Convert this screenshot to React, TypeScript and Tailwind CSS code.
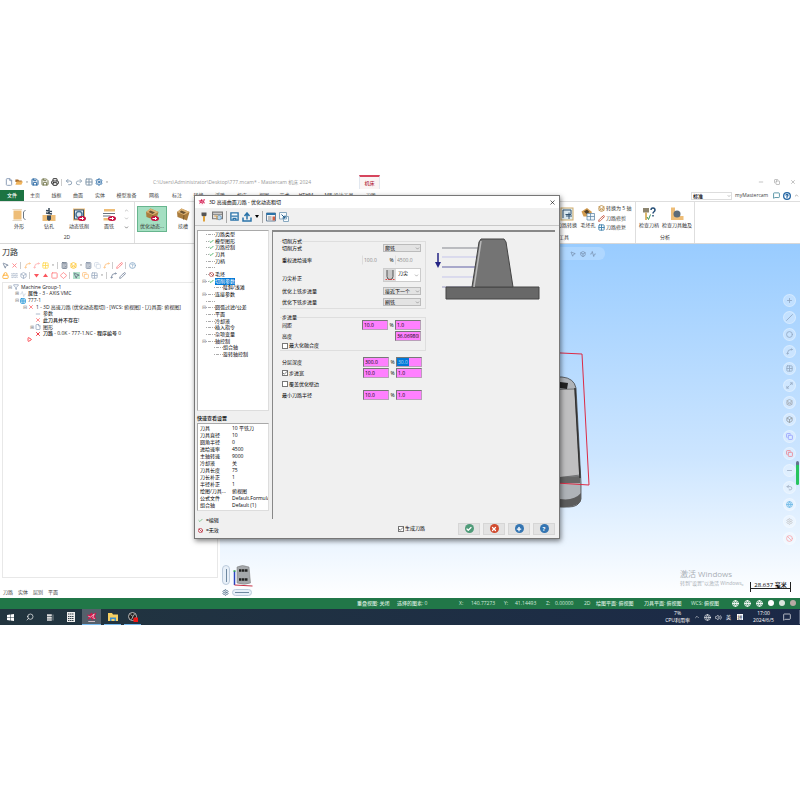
import React, { useState } from "react";
import {
  Activity, Box, Calculator, Check, ChevronDown, ChevronUp, Circle, Copy, Diamond,
  File, Filter, Globe, Grid2x2, HelpCircle, Layers, Lock, Maximize2, MessageSquare, Minus, MousePointer2,
  Pencil, Play, Plus, Printer, Redo2, Save, Search, Settings, Slash, Spline, Square, Undo2, Volume2, Waves, X, Ban,
} from "lucide-react";

type IconType = React.ComponentType<{ className?: string; strokeWidth?: number }>;

// small marks that share the toolbar rows with the icons
function Separator() {
  return <span className="h-[7px] w-[2px] shrink-0 border-l border-[#ccc]" />;
}

function DropMark() {
  return <svg viewBox="0 0 8 12" className="h-[6px] w-[4px] shrink-0"><path d="M2 5h4L4 8z" fill="#888" /></svg>;
}

function Folder({ className = "" }: { className?: string }) {
  return (
    <svg viewBox="0 0 20 16" className={className}>
      <path d="M1 2h7l2 2h7v4H1z" fill="#a86c2c" />
      <path d="M4 7h16l-4 8H1z" fill="#f0b45c" />
    </svg>
  );
}

function TriangleDown({ className = "" }: { className?: string }) {
  return <svg viewBox="0 0 14 14" className={className}><path d="M2 4h10L7 11z" fill="currentColor" /></svg>;
}

function TriangleUp({ className = "" }: { className?: string }) {
  return <svg viewBox="0 0 14 14" className={className}><path d="M2 10h10L7 3z" fill="currentColor" /></svg>;
}

type Tool = [IconType, string] | "sep" | "drop";

const quickAccess: Tool[] = [
  [File, "text-slate-400"],
  [Folder, ""],
  "drop",
  [Save, "text-[#2a68a3]"],
  [Save, "text-[#75784e]"],
  [Printer, "text-[#333]"],
  "sep",
  [Undo2, "text-[#8fa3b8]"],
  [Redo2, "text-[#9fb0c0]"],
  [Grid2x2, "text-[#8499ab]"],
  [Settings, "text-[#2d6da8]"],
  "drop",
];

const ribbonTabs = [
  ["主页", "w-[22px]"], ["线框", "w-[21px]"], ["曲面", "w-[22px]"], ["实体", "w-[22px]"], ["模型准备", "w-[31px]"],
  ["网格", "w-[24px]"], ["标注", "w-[22px]"], ["转换", "w-[21px]"], ["浮雕", "w-[22px]"], ["机床", "w-[22px]"],
  ["视图", "w-[22px]"], ["艺术", "w-[19px]"], ["HTHM", "w-[24px]"], ["MB 设计工具", "w-[42px]"], ["刀路", "w-[22px]"],
];

const panelTools: Tool[][] = [
  [
    [MousePointer2, "text-slate-500"], [X, "text-red-400"], "sep", [Spline, "text-orange-300"], [Spline, "text-red-300"],
    [Grid2x2, "text-amber-300"], "drop", "sep", [Calculator, "text-slate-600"], [Layers, "text-amber-400"], "drop",
    [Calculator, "text-slate-500"], [Copy, "text-slate-300"], [Spline, "text-orange-300"], "sep", [Pencil, "text-red-400"],
    "sep", [HelpCircle, "text-[#6f97bd]"],
  ],
  [
    [Lock, "text-amber-500"], [Waves, "text-slate-400"], [Box, "text-slate-400"], "sep", [TriangleDown, "text-red-500"],
    [TriangleUp, "text-red-500"], [Square, "text-red-400"], [Diamond, "text-red-400"], "sep",
    [MousePointer2, "bg-[#9fdcbf] text-slate-600"], [Copy, "text-orange-300"], [Grid2x2, "text-slate-400"], "drop", "sep",
    [Spline, "text-slate-500"], [Pencil, "text-slate-500"],
  ],
];

const operations: { indent: string; icon: IconType; color: string; text: string; bold?: boolean; toggle?: string }[] = [
  { indent: "pl-[5px]", icon: Filter, color: "text-slate-400", text: "Machine Group-1", bold: true, toggle: "-" },
  { indent: "pl-[12px]", icon: Activity, color: "text-slate-300", text: "属性 - 3 - AXIS VMC", bold: true, toggle: "+" },
  { indent: "pl-[12px]", icon: Grid2x2, color: "text-sky-600", text: "777-1", toggle: "-" },
  { indent: "pl-[20px]", icon: X, color: "text-red-400", text: "1 - 3D 高速刀路 (优化动态粗切) - [WCS: 俯视图] - [刀具面: 俯视图]", toggle: "-" },
  { indent: "pl-[27px]", icon: Minus, color: "text-slate-400", text: "参数" },
  { indent: "pl-[27px]", icon: X, color: "text-red-400", text: "此刀具并不存在!", bold: true },
  { indent: "pl-[27px]", icon: File, color: "text-slate-400", text: "图形", toggle: "+" },
  { indent: "pl-[27px]", icon: X, color: "text-red-600", text: "刀路 - 0.0K - 777-1.NC - 程序编号 0", bold: true },
];

const pages: { text: string; mark?: "ok" | "off"; toggle?: boolean; child?: boolean }[] = [
  { text: "刀路类型" },
  { text: "模型图形", mark: "ok" },
  { text: "刀路控制", mark: "ok" },
  { text: "刀具", mark: "ok" },
  { text: "刀柄" },
  { text: "" },
  { text: "毛坯", mark: "off" },
  { text: "切削参数", mark: "ok", toggle: true },
  { text: "陡斜/浅滩", child: true },
  { text: "连接参数", toggle: true },
  { text: "" },
  { text: "圆弧过滤/公差", toggle: true },
  { text: "平面" },
  { text: "冷却液" },
  { text: "插入指令" },
  { text: "杂项变量" },
  { text: "轴控制", toggle: true },
  { text: "组合轴", child: true },
  { text: "旋转轴控制", child: true },
];

const quickView = [
  ["刀具", "10 平铣刀"], ["刀具直径", "10"], ["圆角半径", "0"], ["进给速率", "4500"], ["主轴转速", "9000"], ["冷却液", "关"],
  ["刀具长度", "75"], ["刀长补正", "1"], ["半径补正", "1"], ["绘图/刀具...", "俯视图"], ["公式文件", "Default.Formula"], ["组合轴", "Default (1)"],
];

const statusItems = [
  ["重叠视图: 关闭", "w-[40px]"], ["选择的图素: 0", "w-[62px]"], ["X:", "w-[12px]"], ["140.77273", "w-[33px]"],
  ["Y:", "w-[11px]"], ["41.14493", "w-[31px]"], ["Z:", "w-[9px]"], ["0.00000", "w-[29px]"], ["2D", "w-[12px]"],
  ["绘图平面: 俯视图", "w-[48px]"], ["刀具平面: 俯视图", "w-[47px]"], ["WCS: 俯视图", "w-[41px]"],
];

const viewTools: [IconType, string][] = [
  [Plus, "text-slate-500"], [Slash, "text-slate-500"], [Circle, "text-slate-500"], [Spline, "text-slate-500"],
  [Grid2x2, "text-slate-500"], [Maximize2, "text-slate-500"], [Layers, "text-stone-500"], [Box, "text-stone-600"],
  [Copy, "text-indigo-500"], [Copy, "text-red-500"], [Minus, "text-slate-500"], [Undo2, "text-slate-500"],
  [Globe, "text-sky-600"], [Settings, "text-stone-400"], [Ban, "text-red-400"],
];

function McamLogo({ className }: { className: string }) {
  return (
    <svg viewBox="0 0 16 16" className={className}>
      <path d="M1 5h4l2-3 2 2 5-2-2 5 2 4-4-1-2 3-1-4-5 3 2-4z" fill="#d4144b" />
      <path d="M3 7l3 1 5-4-2 5 3 1M3 14h9" stroke="#f4dbe2" strokeWidth="1" fill="none" />
    </svg>
  );
}

function RibbonArt({ kind }: { kind: string }) {
  return (
    <svg viewBox="0 0 28 28" className="h-[14px] w-[14px] shrink-0">
      {kind === "contour" && (
        <>
          <rect x="3" y="5" width="16" height="18" fill="#eebd77" />
          <path d="M1 3h19M1 25h19" stroke="#cfb38a" />
          <path d="M27 4l-4 4v12l4 4" stroke="#6c7885" strokeWidth="2" fill="none" />
        </>
      )}
      {kind === "drill" && (
        <>
          <rect x="1" y="14" width="26" height="12" fill="#eebd77" />
          <path d="M14 0v12M8 5l12 2M8 10l12 2" stroke="#37495a" strokeWidth="3" />
          <path d="M10 15h8v8l-4 3-4-3z" fill="#37495a" />
        </>
      )}
      {kind === "mill" && (
        <>
          <rect x="2" y="1" width="24" height="24" fill="#eebd77" />
          <rect x="5" y="4" width="18" height="18" fill="#dce9f2" stroke="#34526e" strokeWidth="2" />
          <circle cx="14" cy="13" r="6" fill="none" stroke="#4c7595" strokeWidth="3" />
        </>
      )}
      {kind === "face" && (
        <>
          <rect x="4" y="2" width="22" height="5" fill="#eebd77" />
          <path d="M2 11h24M2 16h15" stroke="#697580" strokeWidth="2" />
          <rect x="3" y="20" width="15" height="5" fill="#eebd77" />
        </>
      )}
      {(kind === "opti" || kind === "pocket") && (
        <>
          <path d="M2 8L11 1l16 7-5 17L3 18z" fill="#aa7d3e" />
          <path d="M2 8l14 6 11-6L11 1z" fill="#ddb273" />
          <path d="M7 8l4-3 9 4-5 3z" fill="#6a5332" />
          <path d="M16 14l-1 9" stroke="#7d5929" strokeWidth="2" />
        </>
      )}
      {(kind === "mill" || kind === "face" || kind === "opti") && (
        <>
          <ellipse cx="20" cy="21" rx="8" ry="5" fill="#c60f3f" />
          <path d="M15 21h8M20 18l3 3-3 3" stroke="#fff" strokeWidth="2" fill="none" />
        </>
      )}
      {kind === "transform" && (
        <>
          <rect x="2" y="2" width="24" height="24" fill="#dcebf2" stroke="#d1ac68" strokeWidth="2" />
          <path d="M6 22V6h16v9H11" fill="none" stroke="#32536f" strokeWidth="2" />
          <path d="M18 11v13M12 18h12" stroke="#32536f" strokeWidth="2" />
        </>
      )}
      {kind === "holes" && (
        <>
          <path d="M1 9L12 2l10 8-5 9H5z" fill="#d39c4f" />
          <path d="M6 9l6-4 5 5-6 4z" fill="#513f28" />
          <path d="M12 13h15v13H12zM12 19h15M19 13v13" fill="#eef5fa" stroke="#5d85a5" strokeWidth="1.5" />
        </>
      )}
      {kind === "holder" && (
        <>
          <path d="M2 2h12v9H2z" fill="#8d8570" />
          <path d="M8 11v15" stroke="#d2a13d" strokeWidth="3" />
          <path d="M10 20l3 5 4-10" stroke="#3c9456" strokeWidth="2" fill="none" />
          <path d="M18 6c0-6 8-5 8 0 0 4-4 3-4 7M22 16v3" stroke="#244d76" strokeWidth="3" fill="none" />
        </>
      )}
      {kind === "reach" && (
        <>
          <path d="M2 1h8v17h17v8H2z" fill="#eebd77" />
          <circle cx="14" cy="14" r="7" fill="#5c6b78" />
        </>
      )}
    </svg>
  );
}

function RibbonButton({ kind, label, active, width = "w-[30px]" }: { kind: string; label: string; active?: boolean; width?: string }) {
  return (
    <button
      className={`flex h-[26px] shrink-0 flex-col items-center justify-between whitespace-nowrap pt-[1px] pb-[1px] ${width} ${
        active ? "border border-[#67b58e] bg-[#a5dfc2]" : "border border-transparent"
      }`}
    >
      <RibbonArt kind={kind} />
      <span>{label}</span>
    </button>
  );
}

function TitleBar() {
  return (
    <header className="flex h-[14px] items-center">
      <div className="flex w-[153px] items-center gap-[2px] pl-[5px]">
        {quickAccess.map((tool, i) => {
          if (tool === "sep") return <Separator key={i} />;
          if (tool === "drop") return <DropMark key={i} />;
          const [Icon, color] = tool;
          return <Icon key={i} className={`h-[8px] w-[8px] ${color}`} strokeWidth={3} />;
        })}
      </div>
      <div className="w-[206px] whitespace-nowrap text-[#999]">C:\Users\Administrator\Desktop\777.mcam* - Mastercam 机床 2024</div>
      <div className="flex h-full w-[21px] items-center justify-center border-x border-t-2 border-x-slate-200 border-t-[#d6455d] bg-[#faf4f4] font-medium text-[#b52b3e]">机床</div>
      <div className="ml-auto flex gap-[10px] pr-[4px] text-[#888]">
        <Minus className="h-[6px] w-[6px]" />
        <Copy className="h-[6px] w-[6px]" />
        <X className="h-[6px] w-[6px]" />
      </div>
    </header>
  );
}

function TabRow() {
  return (
    <nav className="flex h-[13px] items-center border-b border-[#dedede] pt-[1px]">
      <button className="h-full w-[24px] bg-[#1c7342] font-medium text-white">文件</button>
      {ribbonTabs.map(([label, width]) => (
        <button key={label} className={`shrink-0 whitespace-nowrap text-[#444] ${width}`}>{label}</button>
      ))}
      <div className="ml-auto flex items-center gap-[3px] pr-[1px] text-[#444]">
        <span className="relative">
          <select aria-label="样式" className="block h-[8px] w-[41px] appearance-none border border-[#ddd] bg-white pl-[1px] font-medium text-black">
            <option>标准</option>
          </select>
          <ChevronDown className="pointer-events-none absolute top-[2px] right-[1px] h-[4px] w-[4px]" />
        </span>
        <a href="#my" className="w-[35px]">myMastercam</a>
        <MessageSquare className="h-[7px] w-[7px] text-[#4a8b9e]" strokeWidth={3} />
        <HelpCircle className="h-[8px] w-[8px] text-[#2566a3]" strokeWidth={4} />
        <ChevronUp className="h-[5px] w-[5px]" />
      </div>
    </nav>
  );
}

function Ribbon() {
  return (
    <section className="flex h-[42px] border-b border-[#d8d8d8] bg-white text-[#333]">
      <div className="flex w-[135px] flex-col items-center justify-between border-r border-[#dedede] pt-[4px] pb-[2px]">
        <div className="flex w-full pl-[4px]">
          <RibbonButton kind="contour" label="外形" />
          <RibbonButton kind="drill" label="钻孔" />
          <RibbonButton kind="mill" label="动态铣削" />
          <RibbonButton kind="face" label="面铣" />
          <div className="flex flex-col items-center justify-around text-[#777]">
            <ChevronUp className="h-[5px] w-[5px]" />
            <ChevronDown className="h-[5px] w-[5px]" />
            <ChevronDown className="h-[5px] w-[5px]" strokeWidth={4} />
          </div>
        </div>
        <span>2D</span>
      </div>
      <div className="flex flex-1 gap-[1px] pt-[4px] pl-[2px]">
        <RibbonButton kind="opti" label="优化动态..." active />
        <RibbonButton kind="pocket" label="挖槽" />
      </div>
      <div className="flex w-[80px] flex-col justify-between border-r border-[#dedede] pt-[3px] pb-[2px]">
        <div className="flex">
          <RibbonButton kind="transform" label="刀路转换" width="w-[22px]" />
          <RibbonButton kind="holes" label="毛坯孔" width="w-[20px]" />
          <div className="flex flex-col justify-between whitespace-nowrap">
            {["转换为 5 轴", "刀路修剪", "刀路修复"].map((t, i) => (
              <button key={t} className="flex items-center gap-[1px]">
                {i === 0 ? <Layers className="h-[7px] w-[7px] text-[#bb8a3d]" strokeWidth={3} />
                  : i === 1 ? <Pencil className="h-[7px] w-[7px] text-[#c45740]" strokeWidth={3} />
                  : <Grid2x2 className="h-[7px] w-[7px] text-[#3a7eaa]" strokeWidth={3} />}
                {t}
              </button>
            ))}
          </div>
        </div>
        <span className="pl-[3px]">工具</span>
      </div>
      <div className="mr-[105px] flex w-[59px] flex-col items-center justify-between border-r border-[#dedede] pt-[3px] pb-[2px]">
        <div className="flex">
          <RibbonButton kind="holder" label="检查刀柄" width="w-[24px]" />
          <RibbonButton kind="reach" label="检查刀具触及" width="w-[32px]" />
        </div>
        <span>分析</span>
      </div>
    </section>
  );
}

function OperationsPanel() {
  return (
    <aside className="flex w-[220px] shrink-0 flex-col bg-white">
      <h2 className="h-[16px] pt-[3px] pl-[2px] text-[8px] leading-[10px] text-[#333]">刀路</h2>
      {panelTools.map((row, r) => (
        <div key={r} className="flex h-[10px] items-center gap-[2px] pl-[2px]">
          {row.map((tool, i) => {
            if (tool === "sep") return <Separator key={i} />;
            if (tool === "drop") return <DropMark key={i} />;
            const [Icon, color] = tool;
            return (
              <button key={i} aria-label={`工具 ${r + 1}-${i + 1}`}>
                <Icon className={`h-[7px] w-[7px] opacity-80 ${color}`} strokeWidth={3} />
              </button>
            );
          })}
        </div>
      ))}
      <div className="mx-[2px] mt-[2px] flex-1 border border-[#e8e8e8] pt-[1px]">
        <ul className="grid h-[53px] grid-rows-8">
          {operations.map((op) => (
            <li key={op.text} className={`flex items-center gap-[1px] whitespace-nowrap text-[#222] ${op.indent} ${op.bold ? "font-medium" : ""}`}>
              <span className="w-[4px] text-center text-[#888]">{op.toggle && (op.toggle === "+" ? "⊞" : "⊟")}</span>
              <op.icon className={`mr-[1px] h-[6px] w-[6px] ${op.color}`} strokeWidth={3} />
              {op.text}
            </li>
          ))}
        </ul>
        <Play className="ml-[24px] h-[5px] w-[5px] text-red-500" strokeWidth={4} />
      </div>
      <div className="mt-[8px] flex h-[12px] items-center gap-[5px] pl-[3px] text-[#444]">
        {["刀路", "实体", "层别", "平面"].map((t) => <button key={t}>{t}</button>)}
      </div>
    </aside>
  );
}

function Viewport() {
  return (
    <main className="relative flex-1 overflow-hidden bg-linear-to-b from-[#99ccff] via-[#cce5ff] via-60% to-white">
      {/* selection bar hanging from the top edge */}
      <div className="absolute top-[3px] right-[195px] flex h-[13px] w-[60px] items-center justify-end gap-[4px] rounded-md bg-white/20 pr-[9px] text-slate-500">
        <MousePointer2 className="h-[6px] w-[6px]" />
        <Box className="h-[6px] w-[6px]" />
        <Activity className="h-[6px] w-[6px]" />
      </div>

      {/* part, stock boundary */}
      <svg viewBox="0 0 60 160" className="absolute top-[106px] right-[200px] h-[160px] w-[60px]">
        <path d="M0 27h22q12 1 14 11l5 95v16q-2 8-12 8H0z" fill="#afb3b8" stroke="#333" strokeWidth=".7" />
        <path d="M0 40l35-1 5 86-40 5z" fill="#bfbfc0" stroke="#555" strokeWidth=".7" />
        <path d="M20 32l8 1-1 6-8-1z" fill="#222" />
        <path d="M20 127l20-1v7H20z" fill="#666" />
        <path d="M20 149q14 2 21-6v8q-5 7-21 6z" fill="#5c5c5c" />
        <path d="M35 38l5 90" stroke="#333" strokeWidth="1.5" />
        <path d="M0 2l42 2 7 131-49-3" fill="none" stroke="#dc2b45" />
      </svg>

      {/* gnomon with rotate handles */}
      <div className="absolute bottom-[2px] left-[2px] grid grid-cols-[8px_22px] gap-[2px] text-[#5d7891]">
        <div className="flex h-[20px] w-[8px] items-center justify-center rounded-full border border-[#bccbdc] bg-[#e7eff8]">
          <span className="h-[13px] w-[1px] bg-[#6e88a0]" />
        </div>
        <svg viewBox="0 0 44 44" className="h-[22px] w-[22px]">
          <path d="M10 4q10-6 24 0l3 32q-12 5-27 0z" fill="#a5a8ab" stroke="#777" />
          <path d="M14 11h18M14 29h18" stroke="#222" strokeWidth="5" strokeDasharray="5 1" />
          <path d="M5 40V12" stroke="#2945c0" strokeWidth="3" />
          <path d="M3 12h4" stroke="#2aa64a" strokeWidth="3" />
          <path d="M5 40l36 2" stroke="#c83246" strokeWidth="2" />
        </svg>
        <Settings className="h-[7px] w-[7px]" strokeWidth={3} />
        <div className="flex h-[7px] w-[20px] items-center justify-center rounded-full border border-[#bccbdc] bg-[#e7eff8]">
          <span className="h-[1px] w-[14px] bg-[#6e88a0]" />
        </div>
      </div>

      <div className="absolute top-[50px] right-[4px] flex flex-col gap-[4px]">
        {viewTools.map(([Icon, color], i) => (
          <button key={i} aria-label={`视图 ${i + 1}`} className="flex h-[13px] w-[13px] items-center justify-center rounded-full border border-white/30 bg-white/30">
            <Icon className={`h-[7px] w-[7px] opacity-50 ${color}`} strokeWidth={3} />
          </button>
        ))}
      </div>
      <div className="absolute top-[217px] right-[1px] h-[24px] w-[3px] rounded-xs border-t-4 border-slate-500 bg-[#27c45f]" />

      <div className="absolute right-[44px] bottom-[10px] w-[76px] whitespace-nowrap text-[#aab0b6]">
        <div className="text-[8px] leading-[10px]">激活 Windows</div>
        <div className="leading-[9px]">转到"设置"以激活 Windows。</div>
      </div>
      <div className="absolute right-[9px] bottom-[6px] flex h-[10px] w-[41px] items-start justify-center border-x border-[#222]">
        <span className="w-full border-b border-[#222] text-center text-[6px] leading-[6px] font-medium whitespace-nowrap text-black">28.637 毫米</span>
      </div>
    </main>
  );
}

function NumberBox({ value, label, plain, selected }: { value: string; label: string; plain?: boolean; selected?: boolean }) {
  const [text, setText] = useState(value);
  return (
    <input
      aria-label={label}
      value={text}
      disabled={plain}
      onChange={(e) => setText(e.target.value)}
      className={`h-[10px] w-[26px] border px-[1px] text-[5px] ${
        plain ? "border-transparent border-l-[#ddd] text-[#888]" : "border-[#b9a0b9] border-t-[#777] border-l-[#777] bg-[#ff80ff]"
      } ${selected ? "bg-linear-to-r from-[#0078d7] from-50% to-[#ff80ff] to-50% text-[#b8dbf5]" : ""}`}
    />
  );
}

function PairRow({ label, values, check, plain, selected }: { label: string; values: string[]; check?: boolean; plain?: boolean; selected?: boolean }) {
  return (
    <div className="flex h-[10px] items-center">
      {check === undefined ? <span className="flex-1">{label}</span> : <CheckLabel text={label} checked={check} className="flex-1" />}
      {values.length === 2 && (
        <>
          <NumberBox value={values[0]} label={`${label} %`} plain={plain} />
          <span className="w-[7px] text-center">%</span>
        </>
      )}
      <NumberBox value={values[values.length - 1]} label={label} plain={plain} selected={selected} />
    </div>
  );
}

function CheckLabel({ text, checked, className = "" }: { text: string; checked: boolean; className?: string }) {
  const [on, setOn] = useState(checked);
  return (
    <label className={`flex items-center gap-[1px] ${className}`}>
      <span className="relative flex h-[6px] w-[6px]">
        <input
          type="checkbox"
          checked={on}
          onChange={() => setOn(!on)}
          className="h-[6px] w-[6px] appearance-none border border-[#777] bg-white"
        />
        {on && <Check className="pointer-events-none absolute inset-0 h-[6px] w-[6px]" />}
      </span>
      {text}
    </label>
  );
}

function SelectRow({ label, value }: { label: string; value: string }) {
  return (
    <label className="flex h-[8px] items-center">
      <span className="flex-1">{label}</span>
      <span className="relative">
        <select className="block h-[8px] w-[38px] appearance-none border border-[#bbb] bg-[#e3e3e3] pl-[1px] text-[5px] leading-[6px]">
          <option>{value}</option>
        </select>
        <ChevronDown className="pointer-events-none absolute top-[2px] right-[1px] h-[5px] w-[5px] text-[#555]" />
      </span>
    </label>
  );
}

function PageTree() {
  const [current, setCurrent] = useState("切削参数");
  return (
    <div className="h-[181px] border border-[#a9a9a9] border-r-[#ddd] border-b-[#ddd] bg-white">
      <ul className="grid h-[127px] grid-rows-[repeat(19,minmax(0,1fr))]">
        {pages.map((p, i) => (
          <li key={i} className={`flex items-center whitespace-nowrap ${p.child ? "pl-[12px]" : "pl-[4px]"}`}>
            <span className="w-[4px] text-[#888]">{p.toggle ? "⊟" : ""}</span>
            <span className="h-0 w-[3px] border-t border-dotted border-[#aaa]" />
            <span className="flex w-[6px] items-center">
              {p.mark === "ok" && <Check className="h-[5px] w-[5px] text-[#32a852]" strokeWidth={4} />}
              {p.mark === "off" && <Ban className="h-[5px] w-[5px] text-[#a33]" strokeWidth={3} />}
              {!p.mark && <span className="w-full border-t border-dotted border-[#aaa]" />}
            </span>
            {p.text && (
              <button
                onClick={() => setCurrent(p.text)}
                className={p.text === current ? "bg-[#0078d7] text-white" : ""}
              >
                {p.text}
              </button>
            )}
          </li>
        ))}
      </ul>
    </div>
  );
}

function ToothPreview() {
  return (
    <svg viewBox="-3 0 107 64" className="ml-[8px] h-[64px] w-[107px] shrink-0">
      <path d="M5 12h38" stroke="#85878f" />
      <path d="M5 21h35M5 41h32" stroke="#c5c5ea" />
      <path d="M5 31h34" stroke="#6060a5" />
      <path d="M5 51h32" stroke="#9898c0" />
      <path d="M9 51h93v12H9z" fill="#686868" stroke="#444" />
      <path d="M44 3h23l2 3 7 45H35l7-45z" fill="#747474" stroke="#444" />
      <path d="M44 5l-7 46" stroke="#b9b9b9" strokeWidth="1.5" />
      <path d="M1 17v11" stroke="#252585" strokeWidth="1.5" />
      <path d="M-2 26h6l-3 6z" fill="#252585" />
    </svg>
  );
}

function ToolpathDialog() {
  return (
    <section role="dialog" className="absolute top-[20px] left-[194px] flex h-[344px] w-[366px] flex-col border border-[#777] bg-[#f0f0f0] text-black shadow-[1px_2px_5px_rgba(0,0,0,0.5)]">
      <div className="flex h-[12px] items-center gap-[3px] bg-white px-[3px]">
        <McamLogo className="h-[8px] w-[8px]" />
        <span className="flex-1">3D 高速曲面刀路 - 优化动态粗切</span>
        <button aria-label="关闭"><X className="h-[7px] w-[7px]" /></button>
      </div>
      <div className="flex h-[18px] shrink-0 items-center gap-[3px] border-b border-[#c8c8c8] px-[4px]">
        <svg viewBox="0 0 20 20" className="h-[10px] w-[10px]"><path d="M5 1h10v6l-3 2H8L5 7z" fill="#555" /><path d="M8 8h4v11H8z" fill="#dfa23b" /></svg>
        <svg viewBox="0 0 20 20" className="h-[11px] w-[11px]"><path d="M1 2h18v12H1zM1 6h18" fill="#e8e8e8" stroke="#777" strokeWidth="2" /><circle cx="13" cy="12" r="4" fill="#b8d5eb" stroke="#3978ab" /><path d="M4 9h5v7" stroke="#d09a4b" strokeWidth="2" fill="none" /></svg>
        <span className="h-[12px] w-px bg-[#aaa]" />
        <svg viewBox="0 0 20 20" className="h-[9px] w-[9px]"><path d="M2 2h16v16H2z" fill="#f4fafd" stroke="#2a73a9" strokeWidth="3" /><path d="M3 9h14M7 18v-4h6v4" fill="none" stroke="#2a73a9" strokeWidth="3" /></svg>
        <svg viewBox="0 0 20 20" className="h-[10px] w-[10px]"><path d="M10 15V3M5 8l5-6 5 6M2 11v7h16v-7" fill="none" stroke="#2a73a9" strokeWidth="3" /></svg>
        <svg viewBox="0 0 8 6" className="h-[3px] w-[4px]"><path d="M0 0h8L4 6z" /></svg>
        <span className="h-[12px] w-px bg-[#aaa]" />
        <svg viewBox="0 0 20 20" className="h-[10px] w-[10px]"><path d="M1 2h18v16H1z" fill="#f4f4f4" stroke="#66809a" strokeWidth="2" /><path d="M1 4h18" stroke="#2a73a9" strokeWidth="4" /><path d="M4 10h7M4 14h7" stroke="#888" strokeWidth="2" /><path d="M13 9h5v8h-5z" fill="#d06146" /></svg>
        <svg viewBox="0 0 20 20" className="h-[10px] w-[10px]"><path d="M1 1h14v13H1zM9 9h10v10H9z" fill="#f7fbfd" stroke="#88a9c0" strokeWidth="2" /><path d="M5 5l7 7M12 7v5H7" stroke="#235e8d" strokeWidth="2" fill="none" /></svg>
      </div>

      <div className="flex min-h-0 flex-1 pt-[4px]">
        <div className="flex w-[74px] shrink-0 flex-col pl-[2px]">
          <PageTree />
          <h3 className="mt-[4px] mb-[2px] text-[5px] leading-[6px] font-medium">快速查看设置</h3>
          <div className="h-[88px] overflow-hidden border border-[#a9a9a9] border-r-[#ddd] border-b-[#ddd] bg-white pt-[1px]">
            <table className="w-full table-fixed">
              <tbody>
                {quickView.map(([k, v]) => (
                  <tr key={k} className="h-[7px] whitespace-nowrap">
                    <th scope="row" className="w-[34px] p-0 pl-[2px] text-left font-normal">{k}</th>
                    <td className="p-0">{v}</td>
                  </tr>
                ))}
              </tbody>
            </table>
          </div>
          <div className="mt-[6px] flex flex-col gap-[3px] pl-[1px]">
            <span className="flex items-center gap-[3px]"><Check className="h-[5px] w-[5px] text-[#45a95d]" strokeWidth={3} /> =编辑</span>
            <span className="flex items-center gap-[3px]"><Ban className="h-[5px] w-[5px] text-[#c23a4c]" strokeWidth={4} /> =无效</span>
          </div>
        </div>

        <div className="mr-[4px] ml-[3px] flex flex-1 flex-col">
          <div className="flex h-[289px] border-t-2 border-l border-[#888] pt-[4px] pl-[7px]">
            <form className="mt-[2px] w-[146px] shrink-0">
              <fieldset className="flex flex-col gap-[3px] border border-l-0 border-[#dedede] pr-[4px] pb-[2px] pl-[2px]">
                <legend className="h-[6px]">切削方式</legend>
                <SelectRow label="切削方式" value="爬铣" />
                <PairRow label="重权进给速率" values={["100.0", "4500.0"]} plain />
                <label className="mb-[2px] flex h-[14px] items-end">
                  <span className="flex-1">刀尖补正</span>
                  <span className="relative flex h-[14px] w-[38px] border border-[#ccc] bg-white">
                    <svg viewBox="0 0 22 24" className="h-[12px] w-[12px] bg-[#ddd]"><path d="M5 2v13q0 6 6 6t6-6V2" fill="#c8c8c8" stroke="#555" strokeWidth="2" /><path d="M2 21h18" stroke="#d44" strokeWidth="2" strokeDasharray="3 2" /></svg>
                    <select className="h-[7px] w-[24px] appearance-none pl-[2px] text-[5px] leading-[6px]"><option>刀尖</option></select>
                    <ChevronDown className="pointer-events-none absolute right-[1px] bottom-[3px] h-[5px] w-[5px] text-[#555]" />
                  </span>
                </label>
                <SelectRow label="优化上铣步进量" value="接近下一个" />
                <SelectRow label="优化下铣步进量" value="刷铣" />
              </fieldset>

              <fieldset className="mt-[5px] flex flex-col gap-[1px] border border-l-0 border-[#dedede] pr-[4px] pb-[1px] pl-[2px]">
                <legend className="h-[6px]">步进量</legend>
                <PairRow label="间距" values={["10.0", "1.0"]} />
                <PairRow label="高度" values={["36.069808"]} />
                <CheckLabel text="最大化融合度" checked={false} />
              </fieldset>

              <div className="mt-[6px] flex flex-col gap-[1px] pr-[4px] pl-[2px]">
                <PairRow label="分层深度" values={["300.0", "30.0"]} selected />
                <PairRow label="步进宽" values={["10.0", "1.0"]} check />
                <div className="flex h-[10px] items-center"><CheckLabel text="覆盖优化壁边" checked={false} /></div>
                <PairRow label="最小刀路半径" values={["10.0", "1.0"]} />
              </div>
            </form>
            <ToothPreview />
          </div>
          <div className="flex flex-1 items-center justify-end gap-[3px]">
            <CheckLabel text="生成刀路" checked className="mr-[30px]" />
            {[
              { name: "确定", icon: Check, bg: "bg-[#4f9b79]" },
              { name: "取消", icon: X, bg: "bg-[#d14b2f]" },
              { name: "新增", icon: Plus, bg: "bg-[#3475b2]" },
              { name: "帮助", icon: HelpCircle, bg: "bg-[#3475b2]" },
            ].map((b) => (
              <button key={b.name} aria-label={b.name} className="flex h-[12px] w-[22px] items-center justify-center border border-[#d6d6d6] bg-[#e3e3e3]">
                <span className={`flex h-[9px] w-[9px] items-center justify-center rounded-full text-white ${b.bg}`}>
                  {b.name === "帮助" ? <b className="text-[6px] leading-[6px]">?</b> : <b.icon className="h-[6px] w-[6px]" strokeWidth={5} />}
                </span>
              </button>
            ))}
          </div>
        </div>
      </div>
    </section>
  );
}

function StatusBar() {
  return (
    <footer className="flex h-[11px] items-center justify-end bg-[#217748] pr-[4px] font-medium text-[#d5eade]">
      {statusItems.map(([text, width], i) => (
        <span key={i} className={`shrink-0 whitespace-nowrap ${width}`}>{text}</span>
      ))}
      <div className="flex gap-[5px]">
        {[Globe, Globe, Globe].map((Icon, i) => <Icon key={i} className="h-[7px] w-[7px] text-white" strokeWidth={3} />)}
        <span className="h-[6px] w-[6px] rounded-full bg-white" />
        <span className="h-[6px] w-[6px] rounded-full bg-[#d9e6dd]" />
        <span className="h-[6px] w-[6px] rounded-full bg-[#b8a9a4]" />
      </div>
    </footer>
  );
}

function Taskbar() {
  return (
    <footer className="flex h-[16px] items-center bg-linear-to-r from-[#22353f] to-[#1b2947] text-white">
      <button aria-label="开始" className="flex h-full w-[20px] items-center justify-center">
        <svg viewBox="0 0 14 14" className="h-[7px] w-[7px]"><path d="M0 2l6-1v6H0zM7 1l7-1v7H7zM0 8h6v5l-6-1zM7 8h7v6l-7-1z" fill="#fff" /></svg>
      </button>
      <button aria-label="搜索" className="flex h-full w-[20px] items-center justify-center"><Search className="h-[8px] w-[8px] -scale-x-100" /></button>
      <button aria-label="任务视图" className="flex h-full w-[20px] items-center justify-center">
        <svg viewBox="0 0 14 14" className="h-[7px] w-[7px]"><path d="M0 1h9v3H0zM0 6h9v3H0zM0 11h9v2H0zM12 1v12" fill="#ddd" stroke="#ddd" /></svg>
      </button>
      <button aria-label="计算器" className="flex h-full w-[22px] items-center justify-center">
        <svg viewBox="0 0 16 20" className="h-[10px] w-[8px]"><path d="M0 0h16v20H0z" fill="#eee" /><path d="M2 4h12M2 9h12M2 13h12M2 17h12" stroke="#34434b" strokeWidth="2" strokeDasharray="3 1" /></svg>
      </button>
      <button aria-label="Mastercam" className="flex h-full w-[19px] items-center justify-center border-b border-[#76b9ed] bg-[#54606b]"><McamLogo className="h-[12px] w-[12px]" /></button>
      <button aria-label="文件资源管理器" className="ml-[3px] flex h-full w-[17px] items-center justify-center border-b border-[#76b9ed]">
        <svg viewBox="0 0 20 16" className="h-[8px] w-[10px]"><path d="M0 0h8l2 3h10v13H0z" fill="#f4cf62" /><path d="M4 9h12v7h-3v-4H7v4H4z" fill="#3c90cf" /></svg>
      </button>
      <button aria-label="录屏" className="ml-[3px] flex h-full w-[17px] items-center justify-center border-b border-[#76b9ed]">
        <svg viewBox="0 0 20 20" className="h-[10px] w-[10px]"><circle cx="9" cy="9" r="8" fill="#222" stroke="#bbb" strokeWidth="2" /><path d="M5 5l5 4 3-5M10 9l-3 6" stroke="#aaa" strokeWidth="2" fill="none" /><path d="M11 11h9v9h-9z" fill="#f01414" /></svg>
      </button>
      <div className="ml-auto flex items-center gap-[4px] border-r border-[#55617a] pr-[8px]">
        <div className="text-center">7%<br />CPU利用率</div>
        <ChevronUp className="h-[6px] w-[6px]" />
        <Globe className="h-[7px] w-[7px]" />
        <Volume2 className="h-[7px] w-[7px]" />
        <span>英</span>
        <span className="mx-[2px] flex h-[6px] w-[6px] items-center justify-center bg-white text-[#222]">拼</span>
        <div className="ml-[2px] w-[25px] text-center">17:00<br />2024/6/5</div>
        <MessageSquare className="ml-[3px] h-[8px] w-[8px]" />
      </div>
    </footer>
  );
}

export default function App() {
  return (
    <div className="min-h-screen bg-white py-[175px] font-['Open_Sans','Noto_Sans_CJK_SC',sans-serif] text-[5px] leading-[7px]">
      <div className="relative flex flex-col overflow-hidden">
        <TitleBar />
        <TabRow />
        <Ribbon />
        <div className="flex h-[354px]">
          <OperationsPanel />
          <Viewport />
        </div>
        <StatusBar />
        <Taskbar />
        <ToolpathDialog />
      </div>
    </div>
  );
}
